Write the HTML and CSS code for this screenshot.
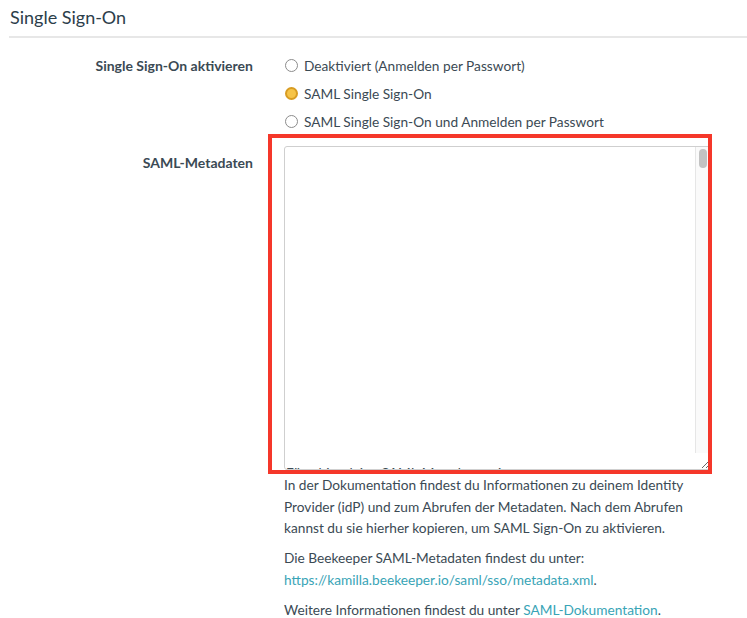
FILE: index.html
```html
<!DOCTYPE html>
<html lang="de">
<head>
    <meta charset="UTF-8">
    <meta name="viewport" content="width=device-width, initial-scale=1.0">
    <title>Single Sign-On</title>
    <link rel="stylesheet" href="styles.css">
</head>
<body>
    <div class="section-title">Single Sign-On</div>

    <div class="form">
        <div class="form-row">
            <div class="form-label">Single Sign-On aktivieren</div>
            <div class="form-control">
                <label class="radio"><span class="radio-dot"></span>Deaktiviert (Anmelden per Passwort)</label>
                <label class="radio"><span class="radio-dot checked"></span>SAML Single Sign-On</label>
                <label class="radio"><span class="radio-dot"></span>SAML Single Sign-On und Anmelden per Passwort</label>
            </div>
        </div>

        <div class="form-row row-meta">
            <div class="form-label label-meta">SAML-Metadaten</div>
            <div class="form-control">
                <div class="textarea-wrap">
                    <textarea id="metadata"></textarea>
                    <div class="scroll-track"><div class="scroll-thumb"></div></div>
                    <div class="under-text"><span>Füge hier deine SAML-Metadaten ein.</span></div>
                    <div class="highlight"></div>
                </div>
                <p class="hint">In der Dokumentation findest du Informationen zu deinem Identity Provider (idP) und zum Abrufen der Metadaten. Nach dem Abrufen kannst du sie hierher kopieren, um SAML Sign-On zu aktivieren.</p>
                <p class="hint">Die Beekeeper SAML-Metadaten findest du unter: <a href="#">https://kamilla.beekeeper.io/saml/sso/metadata.xml</a>.</p>
                <p class="hint">Weitere Informationen findest du unter <a href="#">SAML-Dokumentation</a>.</p>
            </div>
        </div>
    </div>
</body>
</html>
```

FILE: styles.css
```css
body {
    margin: 0;
    font-family: Lato, "Open Sans", sans-serif;
    color: #3b4a54;
    background: #fff;
}

.section-title {
    margin-left: 9px;
    padding: 6px 0 0 1px;
    height: 30px;
    font-size: 18px;
    color: #2c3e4a;
    border-bottom: 2px solid #e7e7e7;
}

.form {
    padding-top: 14px;
}

.form-row {
    display: grid;
    grid-template-columns: 253px 427px;
    column-gap: 31px;
}

.row-meta {
    margin-top: 11px;
}

.form-label {
    text-align: right;
    font-weight: bold;
    font-size: 14px;
    line-height: 28px;
}

.label-meta {
    line-height: 20px;
    padding-top: 7px;
}

.form-control {
    font-size: 13.7px;
}

.radio {
    display: flex;
    align-items: center;
    height: 27.7px;
}

.radio-dot {
    width: 11px;
    height: 11px;
    border: 1px solid #8c8c8c;
    border-radius: 50%;
    margin: 0 6px 0 1px;
    background: #fff;
}

.radio-dot.checked {
    width: 9px;
    height: 9px;
    border: 2px solid #d89c22;
    background: #f6c448;
}

.textarea-wrap {
    position: relative;
    height: 324px;
}

textarea {
    display: block;
    width: 427px;
    height: 324px;
    box-sizing: border-box;
    border: 1px solid #cfcfcf;
    border-radius: 3px;
    resize: vertical;
    font-family: inherit;
    font-size: 14px;
    padding: 4px 6px;
    color: #3b4a54;
    background: #fff;
    overflow: hidden;
}

.scroll-track {
    position: absolute;
    top: 1px;
    right: 1px;
    width: 14px;
    height: 306px;
    background: #fafafa;
    border-left: 1px solid #e6e6e6;
}

.scroll-thumb {
    width: 8px;
    height: 19px;
    margin: 2px 0 0 3px;
    border-radius: 4px;
    background: #c2c2c2;
}

.under-text {
    position: absolute;
    left: 2px;
    top: 320px;
    height: 3px;
    overflow: hidden;
    font-size: 13.7px;
    line-height: 14px;
    white-space: nowrap;
    color: #3b4a54;
}

.under-text span {
    display: block;
}

.highlight {
    position: absolute;
    left: -16px;
    top: -12px;
    width: 436px;
    height: 332px;
    border: 4px solid #f5372a;
    pointer-events: none;
}

.hint {
    margin: 4px 0 0;
    font-size: 13.7px;
    line-height: 21.5px;
    width: 430px;
}

.hint + .hint {
    margin-top: 8.5px;
}

.hint a {
    color: #38a4b6;
    text-decoration: none;
}
```
